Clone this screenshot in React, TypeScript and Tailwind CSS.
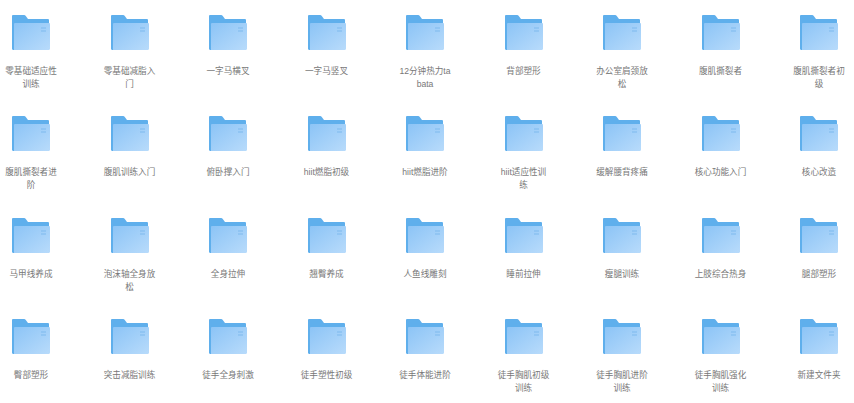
const rows = [
  "零基础适应性训练",
  "零基础减脂入门",
  "一字马横叉",
  "一字马竖叉",
  "12分钟热力tabata",
  "背部塑形",
  "办公室肩颈放松",
  "腹肌撕裂者",
  "腹肌撕裂者初级",
  "腹肌撕裂者进阶",
  "腹肌训练入门",
  "俯卧撑入门",
  "hiit燃脂初级",
  "hiit燃脂进阶",
  "hiit适应性训练",
  "缓解腰背疼痛",
  "核心功能入门",
  "核心改造",
  "马甲线养成",
  "泡沫轴全身放松",
  "全身拉伸",
  "翘臀养成",
  "人鱼线雕刻",
  "睡前拉伸",
  "瘦腿训练",
  "上肢综合热身",
  "腿部塑形",
  "臀部塑形",
  "突击减脂训练",
  "徒手全身刺激",
  "徒手塑性初级",
  "徒手体能进阶",
  "徒手胸肌初级训练",
  "徒手胸肌进阶训练",
  "徒手胸肌强化训练",
  "新建文件夹",
];

function FolderIcon({ id }: { id: number }) {
  return (
    <svg width="38" height="35" viewBox="0 0 38 35" className="block">
      <defs>
        <linearGradient id={`front-${id}`} x1="0" y1="0" x2="1" y2="1">
          <stop offset="0" stopColor="#8cc4f6" />
          <stop offset="1" stopColor="#b8dbfb" />
        </linearGradient>
      </defs>
      <path
        d="M0 1.2C0 .5.5 0 1.2 0h11c.6 0 1 .2 1.4.7L16 4h19.8c.7 0 1.2.5 1.2 1.2V35H1.2C.5 35 0 34.5 0 33.8z"
        fill="#5fafec"
      />
      <path
        d="M2 9.2C2 8.5 2.5 8 3.2 8h33.6c.7 0 1.2.5 1.2 1.2v24.6c0 .7-.5 1.2-1.2 1.2H2z"
        fill={`url(#front-${id})`}
      />
      <rect x="29" y="12.5" width="5" height="1" fill="#7fb9ee" />
      <rect x="29" y="15.5" width="5" height="1" fill="#7fb9ee" />
    </svg>
  );
}

export default function App() {
  return (
    <div className="h-[403px] w-[854px] overflow-hidden bg-white pl-[2px] pt-[15px] font-['Liberation_Sans','Noto_Sans_CJK_SC',sans-serif]">
      <div className="grid grid-cols-[repeat(9,58px)] auto-rows-[101.3px] gap-x-[40.5px]">
        {rows.map((name, i) => (
          <div key={name} className="flex flex-col items-center">
            <FolderIcon id={i} />
            <div className="mt-[15px] w-[53px] break-all text-center text-[8.6px] leading-[13px] text-[#777777]">
              {name}
            </div>
          </div>
        ))}
      </div>
    </div>
  );
}
